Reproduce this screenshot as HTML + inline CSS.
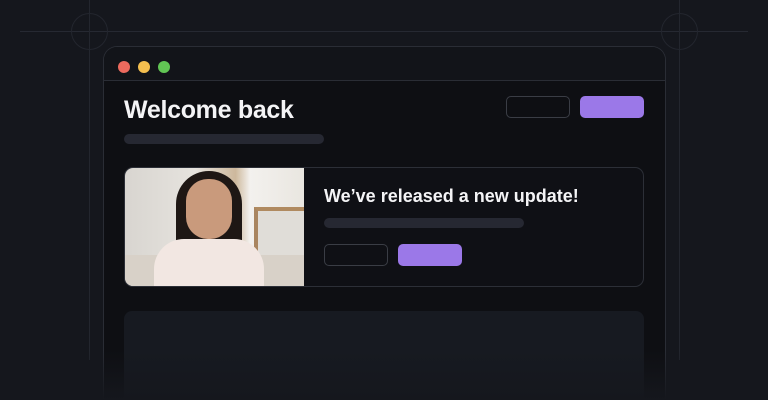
<!DOCTYPE html>
<html><head><style>
*{margin:0;padding:0;box-sizing:border-box}
html,body{width:768px;height:400px;overflow:hidden}
body{background:#15171d;position:relative;font-family:"Liberation Sans",sans-serif}
.a{position:absolute}
</style></head><body>
<div class="a" style="left:20px;right:20px;top:31px;height:1px;background:#262932"></div>
<div class="a" style="left:89px;top:0;bottom:40px;width:1px;background:#23262e"></div>
<div class="a" style="left:679px;top:0;bottom:40px;width:1px;background:#23262e"></div>
<div class="a" style="left:71px;top:13px;width:37px;height:37px;border:1px solid #23262e;border-radius:50%"></div>
<div class="a" style="left:661px;top:13px;width:37px;height:37px;border:1px solid #23262e;border-radius:50%"></div>
<div class="a" style="left:103px;top:46px;width:563px;height:354px;background:#0e0f13;border:1px solid #2a2d35;border-bottom:none;border-radius:14px 14px 0 0;overflow:hidden">
 <div class="a" style="left:0;right:0;top:0;height:34px;background:#121419;border-bottom:1px solid #2a2d35"></div>
 <div class="a" style="left:14px;top:14px;width:12px;height:12px;border-radius:50%;background:#ec6a5e"></div>
 <div class="a" style="left:34px;top:14px;width:12px;height:12px;border-radius:50%;background:#f4bf4f"></div>
 <div class="a" style="left:54px;top:14px;width:12px;height:12px;border-radius:50%;background:#61c554"></div>
 <div class="a" style="left:20px;top:49px;color:#f4f4f6;font-size:25px;font-weight:bold;letter-spacing:-0.3px">Welcome back</div>
 <div class="a" style="left:20px;top:87px;width:200px;height:10px;border-radius:5px;background:#262832"></div>
 <div class="a" style="left:402px;top:49px;width:64px;height:22px;border:1px solid #3a3d45;border-radius:5px"></div>
 <div class="a" style="left:476px;top:49px;width:64px;height:22px;background:#9b78e8;border-radius:5px"></div>
 <div class="a" style="left:20px;top:120px;width:520px;height:120px;border:1px solid #2c2f37;border-radius:9px;overflow:hidden;background:#0f1015">
  <div class="a" style="left:-1px;top:-1px;width:180px;height:120px;background:linear-gradient(90deg,#d8d5d0 0,#e6e3de 40%,#cdb89c 62%,#f3f1ee 70%,#e9e6e0 100%)">
   <div class="a" style="left:130px;top:40px;width:50px;height:52px;background:#e0ddd8;border-top:4px solid #b08a60;border-left:4px solid #a98560"></div>
   <div class="a" style="left:0;top:88px;width:180px;height:32px;background:#d8d1c8"></div>
   <div class="a" style="left:52px;top:4px;width:66px;height:80px;border-radius:33px 33px 10px 10px;background:#1e1714"></div>
   <div class="a" style="left:62px;top:12px;width:46px;height:60px;border-radius:22px;background:#c99a7c"></div>
   <div class="a" style="left:30px;top:72px;width:110px;height:50px;border-radius:30px 30px 0 0;background:#f2e7e2"></div>
  </div>
  <div class="a" style="left:199px;top:18px;color:#f4f4f6;font-size:18px;font-weight:bold">We’ve released a new update!</div>
  <div class="a" style="left:199px;top:50px;width:200px;height:10px;border-radius:5px;background:#262832"></div>
  <div class="a" style="left:199px;top:76px;width:64px;height:22px;border:1px solid #3a3d45;border-radius:5px"></div>
  <div class="a" style="left:273px;top:76px;width:64px;height:22px;background:#9b78e8;border-radius:5px"></div>
 </div>
 <div class="a" style="left:20px;top:264px;width:520px;height:90px;border-radius:8px 8px 0 0;background:#171a21"></div>
</div>
<div class="a" style="left:0;right:0;bottom:0;height:50px;background:linear-gradient(rgba(21,23,29,0),#15171d)"></div>
</body></html>
